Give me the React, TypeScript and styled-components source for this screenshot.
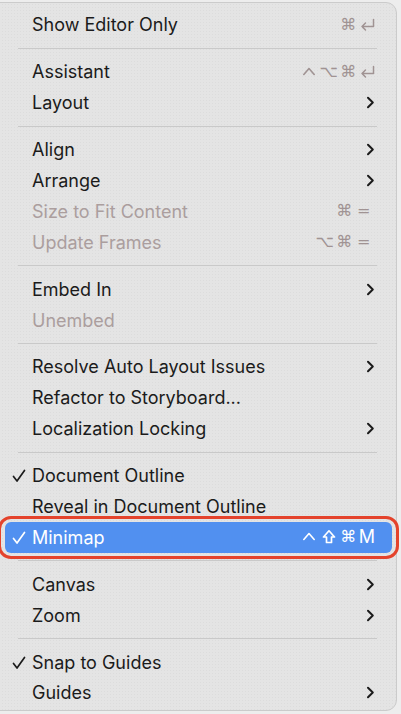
import React from "react";
import styled, { createGlobalStyle } from "styled-components";

const Global = createGlobalStyle`
  html, body { margin: 0; padding: 0; background: #ededed; }
  body { font-family: "Inter", "Noto Sans", "DejaVu Sans", sans-serif; overflow: hidden; }
`;

const Panel = styled.div`
  width: 409px;
  height: 709px;
  margin: 2px 0 0 -12px;
  box-sizing: border-box;
  border: 1px solid #cbcbcb;
  border-radius: 11px;
  background-color: #e4e4e4;
  background-image: radial-gradient(rgba(0, 0, 0, 0.035) 0.6px, transparent 0.8px);
  background-size: 3px 3px;
  padding: 6.5px 4px 0 16px;
  display: flex;
  flex-direction: column;
`;

const Row = styled.div<{ $active?: boolean; $disabled?: boolean }>`
  position: relative;
  height: 30.9px;
  flex: 0 0 30.9px;
  display: flex;
  align-items: center;
  padding: 0 17px 0 27px;
  border-radius: 6px;
  font-size: 18px;
  color: ${(p) => (p.$active ? "#ffffff" : p.$disabled ? "#ab9e9e" : "#1b1b1b")};
  background: ${(p) => (p.$active ? "#5190f0" : "transparent")};
`;

const Label = styled.span`
  flex: 1;
  white-space: nowrap;
`;

const Check = styled.svg`
  position: absolute;
  left: 7px;
  top: 9px;
`;

const Shortcut = styled.span<{ $active?: boolean; $tail?: number }>`
  display: flex;
  align-items: center;
  gap: 5px;
  margin-right: ${(p) => p.$tail ?? 0}px;
  color: ${(p) => (p.$active ? "#ffffff" : "#a09393")};
`;

const Key = styled.span`
  flex: 0 0 14.5px;
  width: 14.5px;
  height: 18px;
  display: flex;
  align-items: center;
  justify-content: center;
  font-family: "DejaVu Sans", sans-serif;
  font-size: 16px;
  line-height: 1;
  overflow: visible;
`;

const Letter = styled(Key)`
  font-family: "Inter", sans-serif;
  font-size: 18px;
  justify-content: flex-end;
`;

const Sep = styled.div`
  flex: 0 0 16px;
  display: flex;
  align-items: center;
  margin: 0 15px 0 13px;
  &::after {
    content: "";
    display: block;
    width: 100%;
    height: 1px;
    background: #c9c9c9;
  }
`;

const Callout = styled.div`
  position: absolute;
  left: -7px;
  right: -7px;
  top: -6px;
  bottom: -6px;
  border: 3px solid #e4432c;
  border-radius: 13px;
  pointer-events: none;
`;

const ReturnIcon = () => (
  <svg width="15" height="14" viewBox="0 0 15 14" style={{ flex: "0 0 15px" }}>
    <path d="M13.5 1.5 V8.5 H2 M5.5 5 L2 8.5 L5.5 12" fill="none" stroke="currentColor" strokeWidth="1.5" strokeLinejoin="round" strokeLinecap="round" />
  </svg>
);

const CaretIcon = () => (
  <svg width="14" height="14" viewBox="0 0 14 14" style={{ flex: "0 0 14px" }}>
    <path d="M1.8 9.5 L7 3.5 L12.2 9.5" fill="none" stroke="currentColor" strokeWidth="1.6" strokeLinejoin="round" strokeLinecap="round" />
  </svg>
);

const ShiftIcon = () => (
  <svg width="14" height="16" viewBox="0 0 14 16" style={{ flex: "0 0 14px" }}>
    <path d="M7 1.8 L12.5 8 H9.5 V13.5 H4.5 V8 H1.5 Z" fill="none" stroke="currentColor" strokeWidth="1.7" strokeLinejoin="round" />
  </svg>
);

const Chevron = () => (
  <svg width="9" height="13" viewBox="0 0 9 13">
    <path d="M2 1.8 L6.8 6.5 L2 11.2" fill="none" stroke="#1b1b1b" strokeWidth="2" strokeLinecap="round" strokeLinejoin="round" />
  </svg>
);

const CheckMark = ({ color }: { color: string }) => (
  <Check width="14" height="14" viewBox="0 0 14 14">
    <path d="M1.5 7.5 L5 12 L12.5 1.5" fill="none" stroke={color} strokeWidth="1.7" strokeLinecap="round" strokeLinejoin="round" />
  </Check>
);

type KeyName = "ctrl" | "opt" | "cmd" | "shift" | "ret" | "=" | "M";

const renderKey = (k: KeyName, j: number) => {
  switch (k) {
    case "ctrl":
      return <Key key={j}><CaretIcon /></Key>;
    case "shift":
      return <Key key={j}><ShiftIcon /></Key>;
    case "ret":
      return <Key key={j}><ReturnIcon /></Key>;
    case "opt":
      return <Key key={j}>⌥</Key>;
    case "cmd":
      return <Key key={j}>⌘</Key>;
    case "=":
      return <Key key={j}>=</Key>;
    default:
      return <Letter key={j}>{k}</Letter>;
  }
};

type Item =
  | { sep: true }
  | {
      sep?: false;
      label: string;
      keys?: KeyName[];
      sub?: boolean;
      disabled?: boolean;
      checked?: boolean;
      active?: boolean;
    };

const items: Item[] = [
  { label: "Show Editor Only", keys: ["cmd", "ret"] },
  { sep: true },
  { label: "Assistant", keys: ["ctrl", "opt", "cmd", "ret"] },
  { label: "Layout", sub: true },
  { sep: true },
  { label: "Align", sub: true },
  { label: "Arrange", sub: true },
  { label: "Size to Fit Content", keys: ["cmd", "="], disabled: true },
  { label: "Update Frames", keys: ["opt", "cmd", "="], disabled: true },
  { sep: true },
  { label: "Embed In", sub: true },
  { label: "Unembed", disabled: true },
  { sep: true },
  { label: "Resolve Auto Layout Issues", sub: true },
  { label: "Refactor to Storyboard..." },
  { label: "Localization Locking", sub: true },
  { sep: true },
  { label: "Document Outline", checked: true },
  { label: "Reveal in Document Outline" },
  { label: "Minimap", checked: true, active: true, keys: ["ctrl", "shift", "cmd", "M"] },
  { sep: true },
  { label: "Canvas", sub: true },
  { label: "Zoom", sub: true },
  { sep: true },
  { label: "Snap to Guides", checked: true },
  { label: "Guides", sub: true },
];

export default function App() {
  return (
    <>
      <Global />
      <Panel>
        {items.map((it, i) => {
          if (it.sep) return <Sep key={i} />;
          const endsWithEq = it.keys && it.keys[it.keys.length - 1] === "=";
          return (
            <Row key={i} $active={it.active} $disabled={it.disabled}>
              {it.checked && <CheckMark color={it.active ? "#ffffff" : "#1b1b1b"} />}
              <Label>{it.label}</Label>
              {it.keys && (
                <Shortcut $active={it.active} $tail={endsWithEq ? 4 : 0}>
                  {it.keys.map(renderKey)}
                </Shortcut>
              )}
              {it.sub && <Chevron />}
              {it.active && <Callout />}
            </Row>
          );
        })}
      </Panel>
    </>
  );
}
